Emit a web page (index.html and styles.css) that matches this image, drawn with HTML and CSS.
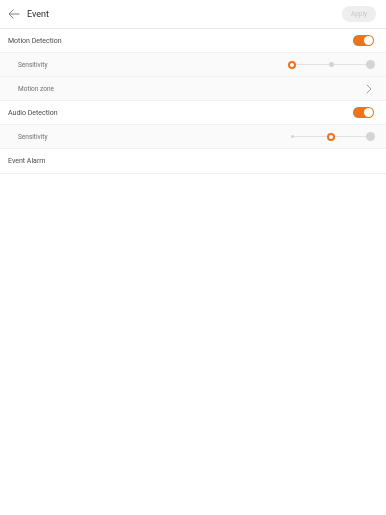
FILE: index.html
```html
<!DOCTYPE html>
<html>
<head>
<meta charset="utf-8">
<link rel="stylesheet" href="styles.css">
</head>
<body>
<div class="page">
<div class="header">
  <svg class="back" width="12" height="10" viewBox="0 0 12 10"><path d="M11.5 5H1M5.5 0.5L1 5l4.5 4.5" fill="none" stroke="#666" stroke-width="0.8"/></svg>
  <span class="title">Event</span>
  <span class="apply">Apply</span>
</div>
<div class="row main">
  <span class="label">Motion Detection</span>
  <span class="toggle"><span class="knob"></span></span>
</div>
<div class="row sub">
  <span class="label">Sensitivity</span>
  <div class="slider">
    <span class="track"></span>
    <span class="stop"><span class="dot sel"></span></span>
    <span class="stop"><span class="dot d2"></span></span>
    <span class="stop"><span class="dot d3"></span></span>
  </div>
</div>
<div class="row sub">
  <span class="label">Motion zone</span>
  <svg class="chev" width="6" height="10" viewBox="0 0 6 10"><path d="M0.8 0.8L5 5L0.8 9.2" fill="none" stroke="#888" stroke-width="0.8"/></svg>
</div>
<div class="row main">
  <span class="label">Audio Detection</span>
  <span class="toggle"><span class="knob"></span></span>
</div>
<div class="row sub">
  <span class="label">Sensitivity</span>
  <div class="slider">
    <span class="track"></span>
    <span class="stop"><span class="dot d1"></span></span>
    <span class="stop"><span class="dot sel"></span></span>
    <span class="stop"><span class="dot d3"></span></span>
  </div>
</div>
<div class="row main last">
  <span class="label">Event Alarm</span>
</div>
</div>
</body>
</html>
```
FILE: styles.css
```css
html, body {
  margin: 0;
  padding: 0;
  background: #ffffff;
  font-family: Roboto, "Noto Sans", sans-serif;
  color: #333;
}
.page {
  will-change: transform;
  -webkit-font-smoothing: antialiased;
  background: #ffffff;
}
.header {
  height: 29px;
  display: flex;
  align-items: center;
  padding: 0 10px 1px 8px;
  border-bottom: 1px solid #e6e6e6;
  box-sizing: border-box;
}
.back {
  display: block;
  margin-right: 7px;
}
.title {
  font-size: 9px;
  color: #2a2a2a;
  flex: 1;
}
.apply {
  width: 34px;
  height: 16px;
  border-radius: 8px;
  background: #eeeeee;
  color: #c8c8c8;
  font-size: 6.5px;
  display: flex;
  align-items: center;
  justify-content: center;
}
.row {
  height: 24px;
  display: flex;
  align-items: center;
  justify-content: space-between;
  box-sizing: border-box;
  border-bottom: 1px solid #f0f0f0;
  padding: 0 12px 0 8px;
}
.row.sub {
  background: #fafafa;
  padding-left: 18px;
}
.row.last {
  height: 25px;
}
.label {
  font-size: 7px;
  color: #4a4a4a;
}
.row.sub .label {
  color: #707070;
  font-size: 6.5px;
}
.toggle {
  width: 21px;
  height: 11px;
  border-radius: 6px;
  background: #f07315;
  display: flex;
  align-items: center;
  justify-content: flex-end;
  padding: 0 1px;
  box-sizing: border-box;
}
.knob {
  width: 9px;
  height: 9px;
  border-radius: 50%;
  background: #fff;
}
.slider {
  position: relative;
  width: 88px;
  height: 12px;
  margin-right: -1px;
  display: flex;
  align-items: center;
  justify-content: space-between;
}
.track {
  position: absolute;
  left: 5px;
  right: 5px;
  top: 5.5px;
  height: 1px;
  background: #e2e2e2;
}
.stop {
  position: relative;
  width: 10px;
  height: 10px;
  display: flex;
  align-items: center;
  justify-content: center;
}
.dot {
  border-radius: 50%;
  background: #d4d4d4;
}
.d1 { width: 3px; height: 3px; }
.d2 { width: 5px; height: 5px; }
.d3 { width: 9px; height: 9px; }
.sel {
  width: 8px;
  height: 8px;
  box-sizing: border-box;
  border: 2px solid #f07315;
  background: #fff;
}
.chev {
  display: block;
  margin-right: 2px;
}
```
